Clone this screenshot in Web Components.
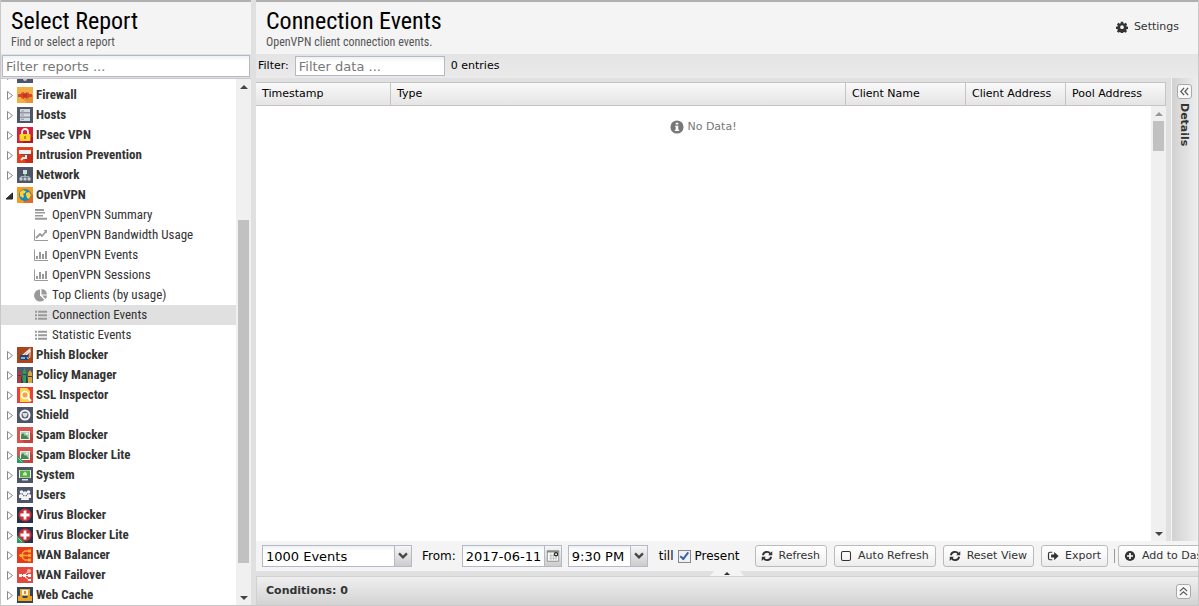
<!DOCTYPE html>
<html lang="en">
<head>
<meta charset="utf-8">
<title>Reports</title>
<style>
html,body{height:100%;margin:0}
body{font:11px/14px "DejaVu Sans",sans-serif;color:#000;background:#e0e0e0;overflow:hidden}
</style>
</head>
<body>
<report-app></report-app>
<script>
const COND = '"Roboto Condensed","Liberation Sans Narrow",Roboto,sans-serif';
const def = (name, html, setup) => customElements.define(name, class extends HTMLElement {
  connectedCallback() {
    if (this.shadowRoot) return;
    const t = document.createElement('template');
    t.innerHTML = html;
    this.attachShadow({mode: 'open'}).append(t.content.cloneNode(true));
    if (setup) setup(this, this.shadowRoot);
  }
});

const svg = (body, box = 16) => `<svg viewBox="0 0 ${box} ${box}" aria-hidden="true">${body}</svg>`;
const slate = '<rect width="16" height="16" fill="#4f5569"/>';
const picture = '<rect width="16" height="16" fill="#d9534f"/><path d="M13 5l3 3v8H8l-4-4z" fill="#c4423f"/><path d="M3 4h10v9H3z" fill="#eee"/><path d="M4 5h8v7H4z" fill="#a9cdb4"/><path d="M4 12V8l2-2 2 3 1-1 3 4z" fill="#3f8a4d"/><circle cx="10" cy="6.500" r="1" fill="#fff"/>';
const cross = '<rect width="16" height="16" fill="#22344f"/><circle cx="8" cy="8" r="6.500" fill="#d02a35"/><path d="M6.600 3.500h2.800v3.100h3.100v2.800H9.400v3.100H6.600V9.400H3.500V6.600h3.100z" fill="#fff"/>';
const lite = '<path d="M0 8l8 8H0z" fill="#2b9a62"/><path d="M1 11l4 4" stroke="#8fd4b0"/>';
const ICONS = {
  events: slate + '<path d="M4 3h8v8H4z" fill="#ddd"/><circle cx="8" cy="12" r="2" fill="#ccc"/>',
  firewall: '<rect width="16" height="16" fill="#f0b043"/><path d="M4 10l6 6h6V8l-2 0z" fill="#e8932e"/><path d="M1 7h3V6l3-1v1h2V5l3 1v1h3v3h-3v1l-3 1v-1H7v1l-3-1v-1H1z" fill="#d8472b"/><path d="M6 7h4v3H6z" fill="#bd3725"/>',
  hosts: slate + '<path d="M3 2h10v3.500H3zM3 6.300h10v3.400H3zM3 10.500h10V14H3z" fill="#d3d8dc"/><path d="M4 3.500h3v1H4zM4 7.500h3v1H4zM4 11.700h3v1H4z" fill="#8b95a4"/>',
  ipsec: '<rect width="16" height="16" fill="#d3203c"/><path d="M13 8l3 3v5H5z" fill="#ac1833"/><path d="M5 8V5a3 3 0 0 1 6 0v3" fill="none" stroke="#f0f0f0" stroke-width="1.800"/><rect x="2.500" y="7" width="11" height="7" rx="1" fill="#ffd42e"/><path d="M7.300 9h1.500v3H7.300z" fill="#a87816"/>',
  intrusion: '<rect width="16" height="16" fill="#e63e20"/><path d="M7 9l9-4v11H9z" fill="#c52d18"/><path d="M2 3h12v4H2z" fill="#efefef"/><path d="M4 7h9v1H4z" fill="#5b5358"/><path d="M9 8v3H6l-2 2" fill="none" stroke="#ececec" stroke-width="2"/>',
  network: slate + '<path d="M8 6v3M4 12V9.500h8V12" fill="none" stroke="#9fb0b5"/><path d="M6 3h4v4H6z" fill="#d5dce0"/><path d="M2.500 10.500h3v3h-3zM6.500 10.500h3v3h-3zM10.500 10.500h3v3h-3z" fill="#c5d0d5"/><path d="M7 7h2v2H7z" fill="#55b06a"/>',
  openvpn: '<rect width="16" height="16" fill="#f79b1e"/><path d="M13 5l3 3v8H6z" fill="#e56a22"/><circle cx="8" cy="8" r="6" fill="#1787c5"/><path d="M3 5l3-2 3 1-1 2-2 1 1 2-1 2-3-2zM9 6l3-1 2 3-2 4-2-1-1-3z" fill="#ffd32f"/>',
  phish: '<rect width="16" height="16" fill="#a8451c"/><path d="M5 9l7-6 1 1-5 5" fill="none" stroke="#e9eff3" stroke-width="1.500"/><path d="M3 8h8v5H3z" fill="#20476d"/><path d="M4 10h4v2H4z" fill="#7fb6d4"/><path d="M13 1v8c0 3-3 3-3 1" fill="none" stroke="#e9e4df"/>',
  policy: '<rect width="16" height="16" fill="#535a6c"/><path d="M1 16V6l1.500-3L4 6v10z" fill="#c93035"/><path d="M6 16V4l1.500-3L9 4v12z" fill="#26a257"/><path d="M11 16V6l2-3 2 3v10z" fill="#d9a83a"/><path d="M1 8h3v1H1zM6 7h3v1H6zM11 9h4v1h-4z" fill="#333f4d"/><path d="M4 8l2 8H4zM9 6l2 10H9z" fill="#353b4b"/>',
  ssl: '<rect width="16" height="16" fill="#e8413c"/><path d="M3 1h7l3 3v11H3z" fill="#ffd441"/><circle cx="8" cy="8" r="3.500" fill="#ffbd6b" stroke="#fff" stroke-width="1.500"/><path d="M11 11l3 3" stroke="#fff" stroke-width="2"/><path d="M6 7h4M6 9h4" stroke="#ef812e"/>',
  shield: slate + '<circle cx="8" cy="8" r="4.500" fill="#555c70" stroke="#f4f4f4" stroke-width="2"/><path d="M5.500 6h5c0 2-.5 3.500-2.500 4.500-2-1-2.500-2.500-2.500-4.500z" fill="#dcdee3"/>',
  spam: picture, spamlite: picture + lite,
  system: slate + '<path d="M2 3h12v8H2z" fill="#eee"/><path d="M3 3.500h10v7H3z" fill="#54ad42"/><path d="M5 12h6v1.500H5z" fill="#ddd"/><path d="M8 4.500l2 2v2H6v-2z" fill="#c7ecc0"/>',
  users: slate + '<g fill="#f4f4f4"><circle cx="4.500" cy="5" r="1.800"/><circle cx="11.500" cy="5" r="1.800"/><circle cx="8" cy="6.500" r="2.200"/><path d="M2 8q2-2 4 0v3H2zM10 8q2-2 4 0v3h-4zM4 13q0-4 4-4t4 4z"/></g>',
  virus: cross, viruslite: cross + lite,
  balancer: '<rect width="16" height="16" fill="#e8391f"/><path d="M2 8.500h3M12 4H8L5.500 6v5L8 13h4M5.500 8.500H12" fill="none" stroke="#f9ae31" stroke-width="1.500"/><path d="M3 7h3v3H3zM11 2.500h3v3h-3zM11 7h3v3h-3zM11 11.500h3v3h-3z" fill="#f9ae31"/>',
  failover: '<rect width="16" height="16" fill="#e5483e"/><path d="M2 8.500h5L12 4M7 8.500h5M7 9l5 4" fill="none" stroke="#fff"/><path d="M2 7h3v3H2zM6 7h3v3H6zM11 7h3v3h-3zM11 12h3v2h-3z" fill="#fff"/><circle cx="12" cy="4" r="2" fill="#f5b5ab"/>',
  cache: '<rect width="16" height="16" fill="#33445e"/><path d="M3 2h10v7H3z" fill="#efa826"/><path d="M5 3h6v5H5z" fill="#f5f5f5"/><path d="M1 9h4l1 2h4l1-2h4v5H1z" fill="#f2a31d"/><path d="M7 4h2v3H7z" fill="#e98b1b"/>',
  summary: '<path d="M2 2h9v2H2zM2 5h10v1.500H2zM2 8h8v1.500H2zM2 10.700h12v2H2z" fill="#999"/>',
  line: '<path d="M1.500 2.500v11H15" fill="none" stroke="#999"/><path d="M3 11l4-4 2 2 4-4.500" fill="none" stroke="#999" stroke-width="1.800"/><path d="M10.500 3H14v3.500z" fill="#999"/>',
  bars: '<path d="M1.500 2.500v11H15" fill="none" stroke="#999"/><path d="M3 9h2v3H3zM6 5h2v7H6zM9 7h2v5H9zM12 4h2v8h-2z" fill="#999"/>',
  pie: '<path d="M7 2.500V8.500l4.300 4.300A6 6 0 1 1 7 2.500z" fill="#999"/><path d="M8.500 2a6 6 0 0 1 5.500 5.500H8.500zM9 8.500h5a5 5 0 0 1-1.500 3.500z" fill="#999"/>',
  list: '<path d="M2 3.700h2v2H2zM5 3.700h9v2H5zM2 7.200h2v2H2zM5 7.200h9v2H5zM2 10.700h2v2H2zM5 10.700h9v2H5z" fill="#999"/>',
  gear: '<g fill="#333"><path fill-rule="evenodd" d="M6.500 1h3l.4 2 1.200.6 1.700-1.200 2 2-1.200 1.800.5 1.200 1.900.3v2.800l-2 .4-.5 1.200 1.100 1.700-2 2-1.700-1.200-1.200.5-.4 1.900h-2.800l-.4-2-1.200-.5-1.700 1.100-2-2 1.200-1.700-.5-1.200L0 10.500V7.700l2-.3.5-1.200-1.200-1.800 2-2L5 3.600 6.200 3zM8 5.700a2.500 2.500 0 1 0 0 5 2.500 2.500 0 0 0 0-5z"/></g>',
  refresh: '<path d="M2.500 7A5.500 5.500 0 0 1 12.500 5M13.500 9A5.500 5.500 0 0 1 3.500 11" fill="none" stroke="#333" stroke-width="2.500"/><path d="M15 1.500V7H9.500zM1 14.500V9h5.500z" fill="#333"/>',
  box: '<rect x="2" y="2" width="12" height="12" rx="2" fill="none" stroke="#333" stroke-width="1.400"/>',
  exporter: '<path d="M7 3H4Q2 3 2 5v6q0 2 2 2h3" fill="none" stroke="#333" stroke-width="1.600"/><path d="M5.500 6h4V2.500L15.500 8l-6 5.500V10h-4z" fill="#333"/>',
  plus: '<circle cx="8" cy="8" r="6.800" fill="#333"/><path d="M8 4v8M4 8h8" stroke="#fff" stroke-width="2.200"/>',
  info: '<circle cx="8" cy="8" r="7.500" fill="#777"/><path d="M6.500 3h3v2h-3zM6 6.500h3.500V11h1v1.500H5.500V11h1V8H6z" fill="#fff"/>',
  chevron: '<path d="M3.500 5l4.500 4.500L12.500 5" fill="none" stroke="#444" stroke-width="2.600"/>',
  calendar: '<path d="M1.500 2h13v12h-13z" fill="#fafafa" stroke="#888"/><path d="M1 2h14v2H1z" fill="#888"/><path d="M4 7.500h8M4 10.500h8M5.500 5v8M8.500 5v8M11.500 8v5" stroke="#bbb"/><circle cx="11.500" cy="6" r="1.800" fill="#fff" stroke="#222" stroke-width="1.400"/>',
  left2: '<path d="M7.500 3.500L3.500 8l4 4.500M12.500 3.500L8.500 8l4 4.500" fill="none" stroke="#555" stroke-width="1.500"/>',
  up2: '<path d="M3.500 7.500L8 3.500l4.500 4M3.500 12.500L8 8.500l4.500 4" fill="none" stroke="#555" stroke-width="1.500"/>',
  closed: '<path d="M6.500 4.500v8l5-4z" fill="#fff" stroke="#888"/>',
  open: '<path d="M11.500 6v6H5z" fill="#333" stroke="#222"/>'
};

customElements.define('r-icon', class extends HTMLElement {
  connectedCallback() {
    if (!this.shadowRoot) this.attachShadow({mode: 'open'}).innerHTML =
      `<style>:host{display:block;flex:none;width:16px;height:16px}svg{display:block;width:100%;height:100%}</style>` + svg(ICONS[this.getAttribute('name')]);
  }
});

def('panel-header', `<style>
:host{display:flex;flex:none;box-sizing:border-box;height:54px;padding:5px 20px 0 10px;background:#f4f4f4;border-top:2px solid #b0b0b0;justify-content:space-between}
h1{margin:0;font:400 24px/28px ${COND}}
p{margin:0;font:12px/14px ${COND};color:#555}
</style><div><h1><slot name="title"></slot></h1><p><slot name="sub"></slot></p></div><slot></slot>`);

def('scroll-bar', `<style>
:host{display:flex;flex:none;flex-direction:column;width:15px;background:#f0f0f0}
i{height:15px;flex:none;display:flex;align-items:center;justify-content:center}
svg{width:8px;height:4px}
b{margin:0 2px 0 2px;background:#c1c1c1;flex:0 0 var(--thumb)}
.before{flex:0 0 var(--before)}
.rest{flex:1}
</style><i><svg viewBox="0 0 8 4"><path d="M0 4l4-4 4 4z" fill="var(--up,#444)"/></svg></i><span class="before"></span><b></b><span class="rest"></span><i><svg viewBox="0 0 8 4"><path d="M0 0h8L4 4z" fill="#444"/></svg></i>`);

def('tree-item', `<style>
:host{display:flex;align-items:center;height:20px;flex:none;font:700 13px/20px ${COND};color:#333;white-space:nowrap}
:host([leaf]){padding-left:32px;font-weight:400}
:host([selected]){background:#e0e0e0}
span{padding-left:3px}
</style><span><slot></slot></span>`, (el, root) => {
  const names = [el.getAttribute('icon')];
  if (!el.hasAttribute('leaf')) names.unshift(el.hasAttribute('open') ? 'open' : 'closed');
  names.forEach(n => { const i = document.createElement('r-icon'); i.setAttribute('name', n); root.querySelector('span').before(i); });
});

const TREE = [['events','Events'],['firewall','Firewall'],['hosts','Hosts'],['ipsec','IPsec VPN'],['intrusion','Intrusion Prevention'],['network','Network'],['openvpn','OpenVPN','open'],
['summary','OpenVPN Summary','leaf'],['line','OpenVPN Bandwidth Usage','leaf'],['bars','OpenVPN Events','leaf'],['bars','OpenVPN Sessions','leaf'],['pie','Top Clients (by usage)','leaf'],['list','Connection Events','leaf selected'],['list','Statistic Events','leaf'],
['phish','Phish Blocker'],['policy','Policy Manager'],['ssl','SSL Inspector'],['shield','Shield'],['spam','Spam Blocker'],['spamlite','Spam Blocker Lite'],['system','System'],['users','Users'],['virus','Virus Blocker'],['viruslite','Virus Blocker Lite'],['balancer','WAN Balancer'],['failover','WAN Failover'],['cache','Web Cache']];

def('report-tree', `<style>
:host{display:flex;flex:1;min-height:0;background:#fff;border-top:1px solid #c8c8c8}
nav{flex:1;overflow:hidden}
tree-item:first-child{margin-top:-14px}
scroll-bar{--before:126px;--thumb:343px}
</style><nav>${TREE.map(([i,t,f='']) => `<tree-item icon="${i}" ${f}>${t}</tree-item>`).join('')}</nav><scroll-bar></scroll-bar>`);

def('text-field', `<style>
:host{display:block}
div{display:flex;height:100%;box-sizing:border-box;border:1px solid #b5b8c8;background:linear-gradient(#eef1f1,#fff 5px)}
input{flex:1;min-width:0;box-sizing:border-box;border:0;padding:0 3px;background:none;font:13px "DejaVu Sans",sans-serif;color:#000;outline:0}
input::placeholder{color:#777;opacity:1}
button{flex:none;width:17px;padding:0;border:0;border-left:1px solid #b5b8c8;background:linear-gradient(#f6f6f6,#ccc);display:flex;align-items:center;justify-content:center}
r-icon{width:14px;height:14px}
</style><div><input type="text"></div>`, (el, root) => {
  const input = root.querySelector('input');
  input.placeholder = el.getAttribute('placeholder') || '';
  input.value = el.getAttribute('value') || '';
  input.setAttribute('aria-label', el.getAttribute('label'));
  if (el.hasAttribute('trigger')) {
    const b = document.createElement('button');
    b.setAttribute('aria-label', 'Open ' + el.getAttribute('label'));
    b.innerHTML = `<r-icon name="${el.getAttribute('trigger')}"></r-icon>`;
    input.after(b);
  }
});

def('tool-button', `<style>
:host{display:block;flex:none}
button{display:flex;align-items:center;gap:6px;height:22px;box-sizing:border-box;border:1px solid #bbb;border-radius:3px;padding:0 6px 0 5px;background:linear-gradient(#fff,#f8f8f8 50%,#ececec);font:11px/20px "DejaVu Sans",sans-serif;color:#333;white-space:nowrap}
:host([plain]) button{border-color:transparent;background:none}
r-icon{width:12px;height:12px}
</style><button type="button"><r-icon></r-icon><slot></slot></button>`, (el, root) => {
  const n = document.createElement('r-icon'); n.setAttribute('name', el.getAttribute('icon'));
  root.querySelector('r-icon').replaceWith(n);
});

def('collapse-tool', `<style>
:host{display:block;flex:none}
button{display:block;width:15px;height:15px;box-sizing:border-box;padding:0;border:1px solid #aaa;border-radius:3px;background:#f8f8f8}
r-icon{width:13px;height:13px}
</style><button type="button"></button>`, (el, root) => {
  const b = root.querySelector('button');
  b.setAttribute('aria-label', el.getAttribute('label'));
  b.innerHTML = `<r-icon name="${el.getAttribute('icon')}"></r-icon>`;
});

def('data-grid', `<style>
:host{display:flex;flex-direction:column;flex:1;min-width:0;min-height:0;margin-top:4px;background:#fff}
table{flex:none;width:100%;table-layout:fixed;border-collapse:separate;border-spacing:0}
th{height:22px;padding:0 0 0 6px;text-align:left;font-weight:400;font-size:11px;line-height:14px;background:linear-gradient(#f9f9f9,#e6e4e5);border:solid #c5c5c5;border-width:1px 1px 1px 0}
.t{width:128px}.n{width:113px}.a{width:93px}
.body{flex:1;display:flex;min-height:0}
p{flex:1;margin:14px 0 0;display:flex;justify-content:center;align-items:center;align-self:flex-start;gap:3px;color:#777}
r-icon{width:14px;height:14px}
scroll-bar{--before:0px;--thumb:30px;--up:#999}
</style><table><thead><tr><th class="t">Timestamp</th><th>Type</th><th class="n">Client Name</th><th class="a">Client Address</th><th class="a">Pool Address</th></tr></thead></table>
<div class="body"><p><r-icon name="info"></r-icon>No Data!</p><scroll-bar></scroll-bar></div>`);

def('details-strip', `<style>
:host{display:flex;flex:none;flex-direction:column;align-items:center;box-sizing:border-box;width:27px;padding:6px 2px 0 0;gap:4px;background:linear-gradient(90deg,#d2d2d2,#eee);border-left:1px solid #f4f4f4}
h2{margin:0;writing-mode:vertical-rl;font:700 11px/14px "DejaVu Sans",sans-serif;color:#333}
</style><collapse-tool icon="left2" label="Expand details"></collapse-tool><h2>Details</h2>`);

def('range-bar', `<style>
:host{display:flex;flex:none;align-items:center;height:30px;background:#f4f4f4;padding-left:6px;overflow:hidden;white-space:nowrap;font-size:12px}
text-field{height:22px;flex:none}
.limit{width:150px}.date{width:100px}.time{width:80px}
.from{margin:0 6px 0 10px}.date{margin-right:6px}
label{display:flex;align-items:center;margin:0 15px 0 11px;gap:4px}
input{appearance:none;box-sizing:border-box;margin:0;width:13px;height:13px;border:1px solid #888;background:#eef1f5;display:grid;place-items:center}
input:checked::before{content:"";width:3px;height:7px;border:solid #3f5fa8;border-width:0 2px 2px 0;transform:rotate(38deg) translate(-1px,-1px)}
tool-button{margin-right:7px}
hr{flex:none;margin:0 3px 0 -1px;height:14px;border:0;border-left:1px solid #999}
</style>
<text-field class="limit" label="limit" value="1000 Events" trigger="chevron"></text-field>
<span class="from">From:</span>
<text-field class="date" label="date" value="2017-06-11" trigger="calendar"></text-field>
<text-field class="time" label="time" value="9:30 PM" trigger="chevron"></text-field>
<label for="present">till <input id="present" type="checkbox" checked> Present</label>
<tool-button icon="refresh">Refresh</tool-button><tool-button icon="box">Auto Refresh</tool-button><tool-button icon="refresh">Reset View</tool-button><tool-button icon="exporter">Export</tool-button><hr><tool-button icon="plus">Add to Dashboard</tool-button>`);

def('conditions-bar', `<style>
:host{display:block;flex:none}
.split{height:5px;display:flex;justify-content:center;background:#e0e0e0}
svg{width:34px;height:5px}
.bar{display:flex;justify-content:space-between;align-items:center;height:28px;padding:0 7px 0 9px;border:solid #d0d0d0;border-width:1px 0 0 1px;background:linear-gradient(#efefef,#d3d3d3)}
h2{margin:0;font:700 11px/14px "DejaVu Sans",sans-serif;color:#333}
</style><div class="split"><svg viewBox="0 0 34 5"><path d="M0 5l4-5h26l4 5z" fill="#f4f4f4"/><path d="M14 4l3-3 3 3z" fill="#333"/></svg></div>
<div class="bar"><h2>Conditions: 0</h2><collapse-tool icon="up2" label="Expand conditions"></collapse-tool></div>`);

def('report-app', `<style>
:host{display:flex;height:100vh;box-sizing:border-box;border:solid #c8c8c8;border-width:0 1px 1px;background:#e0e0e0}
aside{display:flex;flex-direction:column;flex:none;width:250px}
aside text-field{height:22px;margin:1px}
main{display:flex;flex-direction:column;flex:1;min-width:0;margin-left:5px}
tool-button{margin:9px -8px 0 0}
.filter{display:flex;flex:none;height:24px;align-items:center;padding-left:2px;background:linear-gradient(#e4e4e4,#eaeaea)}
.filter text-field{width:150px;height:20px;margin:0 6px}
.work{display:flex;flex:1;min-height:0}
data-grid{margin-right:5px}
</style>
<aside><panel-header><span slot="title">Select Report</span><span slot="sub">Find or select a report</span></panel-header>
<text-field label="Filter reports" placeholder="Filter reports ..."></text-field><report-tree></report-tree></aside>
<main><panel-header><span slot="title">Connection Events</span><span slot="sub">OpenVPN client connection events.</span><tool-button plain icon="gear">Settings</tool-button></panel-header>
<div class="filter"><span>Filter:</span><text-field label="Filter data" placeholder="Filter data ..."></text-field><span>0 entries</span></div>
<div class="work"><data-grid></data-grid><details-strip></details-strip></div>
<range-bar></range-bar><conditions-bar></conditions-bar></main>`);
</script>
</body>
</html>
